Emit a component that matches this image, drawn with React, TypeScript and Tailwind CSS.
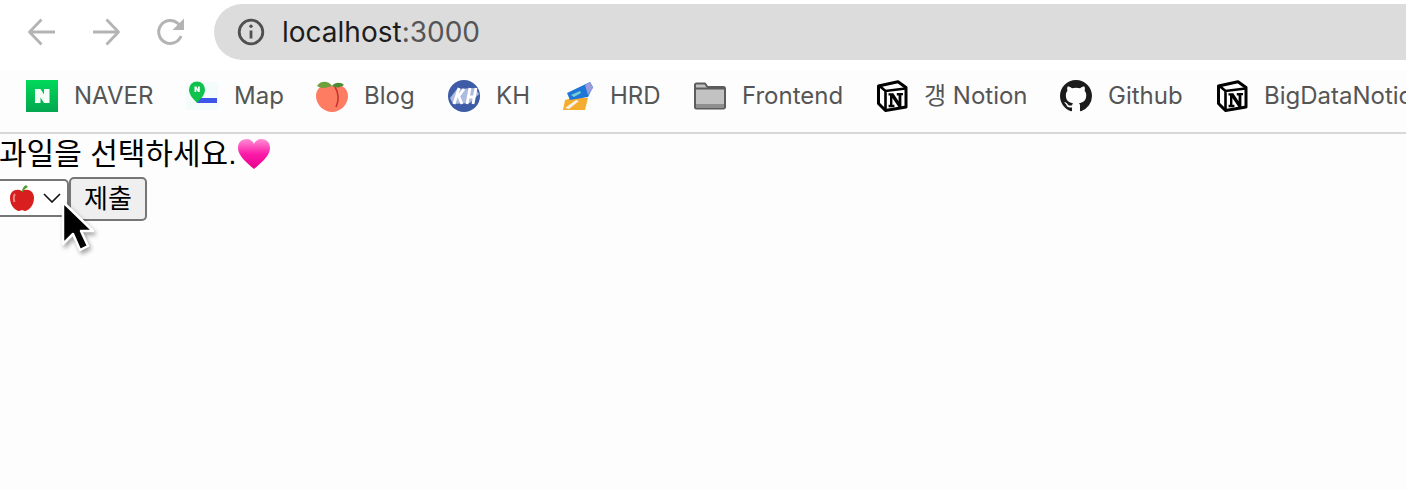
import React from 'react';

const NotionIcon = () => (
  <svg width="32" height="32" viewBox="0 0 32 32" className="shrink-0">
    <path d="M2.5 6 L22 1.8 L30 7.5 V27 L9.5 30.5 L2.5 23.5 Z" fill="#fff" stroke="#000" strokeWidth="3" strokeLinejoin="round" />
    <path d="M3 5.5 L9.5 11 L29.5 8.5 M9.5 11 V30" fill="none" stroke="#000" strokeWidth="2.6" />
    <path d="M12.5 13.2 H17.3 L22.6 21.2 V15.4 H20.8 V13 H27 V15.3 H25.4 V27.2 H22.6 L16.4 18 V24.8 H18.4 V27.2 H12.6 V24.8 H14 V15.4 H12.5 Z" fill="#000" />
  </svg>
);

const bookmarks: { label: string; labelClass: string; icon: React.ReactNode }[] = [
  {
    label: 'NAVER',
    labelClass: 'w-[78px]',
    icon: (
      <svg width="32" height="32" viewBox="0 0 32 32" className="shrink-0">
        <defs>
          <linearGradient id="naver" x1="0" y1="0" x2="0" y2="1">
            <stop offset="0" stopColor="#00d95a" />
            <stop offset="1" stopColor="#03a64f" />
          </linearGradient>
        </defs>
        <rect width="32" height="32" fill="url(#naver)" />
        <path d="M9 9 H14.5 L18 14.5 V9 H23.5 V23 H18 L14.5 17.5 V23 H9 Z" fill="#f4fff8" />
      </svg>
    ),
  },
  {
    label: 'Map',
    labelClass: 'w-[48px]',
    icon: (
      <svg width="32" height="32" viewBox="0 0 32 32" className="shrink-0">
        <rect x="0" y="2" width="32" height="28" fill="#f3fbfb" />
        <rect x="11" y="18" width="20" height="5" fill="#3d55e8" />
        <path d="M11 23 C7 18.5 3 15 3 9.5 A8 8 0 0 1 19 9.5 C19 15 15 18.5 11 23 Z" fill="#0fc24d" />
        <path d="M8.5 6.5 H10.3 L12 9.3 V6.5 H13.8 V12 H12 L10.3 9.3 V12 H8.5 Z" fill="#fff" />
      </svg>
    ),
  },
  {
    label: 'Blog',
    labelClass: 'w-[50px]',
    icon: (
      <svg width="32" height="32" viewBox="0 0 32 32" className="shrink-0">
        <path d="M16 6 C22 3 32 6 32 16 C32 25 24 32 16 32 C8 32 0 25 0 16 C0 6 10 3 16 6 Z" fill="#fd7c62" />
        <path d="M19 7 C23 13 23 21 20 27" fill="none" stroke="#c2342c" strokeWidth="1.6" />
        <path d="M1 6 C4 1 12 0 16 6 C11 8 5 9 1 6 Z" fill="#6fa03c" />
        <path d="M16 6 C19 2 25 2 28 5 C24 8 20 8 16 6 Z" fill="#4d8a34" />
      </svg>
    ),
  },
  {
    label: 'KH',
    labelClass: 'w-[32px]',
    icon: (
      <svg width="32" height="32" viewBox="0 0 32 32" className="shrink-0">
        <circle cx="16" cy="16" r="16" fill="#3d5ba6" />
        <path d="M2 18 L9 9 L27 8 L31 14 L22 23 L5 24 Z" fill="#aebbe0" />
        <path d="M11 8 L6 24 M10 17 L16 9 M11 17 L14 24 M19 24 L22 8 M25 24 L28 8 M19 17 H27" stroke="#fff" strokeWidth="2.8" fill="none" />
      </svg>
    ),
  },
  {
    label: 'HRD',
    labelClass: 'w-[50px]',
    icon: (
      <svg width="32" height="32" viewBox="0 0 32 32" className="shrink-0">
        <path d="M3 20 L10 18 L26 18 L23 30 L1 30 Z" fill="#f4ad2e" />
        <path d="M5 13 L28 2 L31 7 L26 17 L8 20 Z" fill="#1f76d6" />
        <path d="M23 5 L28 2 L31 8 L26 15 Z" fill="#9a9cdc" />
        <path d="M9 15 L18 11 L19 13 L12 17 Z" fill="#6fd0d8" />
        <path d="M3 28 L14 20 L17 21 L7 29 Z" fill="#f6f2e6" />
      </svg>
    ),
  },
  {
    label: 'Frontend',
    labelClass: 'w-[100px]',
    icon: (
      <svg width="32" height="32" viewBox="0 0 32 32" className="shrink-0">
        <path d="M1 27 V5 A1.5 1.5 0 0 1 2.5 3.5 H11 L13.5 7 H29.5 A1.5 1.5 0 0 1 31 8.5 V27 A1.5 1.5 0 0 1 29.5 28.5 H2.5 A1.5 1.5 0 0 1 1 27 Z" fill="#c2c2c2" stroke="#5c5c5c" strokeWidth="2" strokeLinejoin="round" />
        <path d="M1 8.5 H31" stroke="#5c5c5c" strokeWidth="2" />
        <rect x="2" y="24" width="28" height="3.5" fill="#8f8f8f" />
      </svg>
    ),
  },
  { label: '갱 Notion', labelClass: 'w-[102px]', icon: <NotionIcon /> },
  {
    label: 'Github',
    labelClass: 'w-[74px]',
    icon: (
      <svg width="32" height="32" viewBox="0 0 16 16" className="shrink-0" fill="#1b1b1b">
        <path d="M8 0C3.58 0 0 3.58 0 8c0 3.54 2.29 6.53 5.47 7.59.4.07.55-.17.55-.38 0-.19-.01-.82-.01-1.49-2.01.37-2.53-.49-2.69-.94-.09-.23-.48-.94-.82-1.13-.28-.15-.68-.52-.01-.53.63-.01 1.08.58 1.23.82.72 1.21 1.87.87 2.33.66.07-.52.28-.87.51-1.07-1.78-.2-3.64-.89-3.64-3.95 0-.87.31-1.59.82-2.15-.08-.2-.36-1.02.08-2.12 0 0 .67-.21 2.2.82.64-.18 1.32-.27 2-.27s1.36.09 2 .27c1.53-1.04 2.2-.82 2.2-.82.44 1.1.16 1.92.08 2.12.51.56.82 1.27.82 2.15 0 3.07-1.87 3.75-3.65 3.95.29.25.54.73.54 1.48 0 1.07-.01 1.93-.01 2.2 0 .21.15.46.55.38A8.01 8.01 0 0 0 16 8c0-4.42-3.58-8-8-8z" />
      </svg>
    ),
  },
  { label: 'BigDataNotion', labelClass: '', icon: <NotionIcon /> },
];

export default function App() {
  return (
    <div className="relative h-[490px] w-[1406px] overflow-hidden bg-[#fdfdfd] font-['Liberation_Sans','Noto_Sans_CJK_KR',sans-serif] text-black">
      {/* Toolbar */}
      <div className="flex h-[70px] items-start bg-white pt-1">
        <div className="flex h-14 w-[214px] shrink-0 items-center gap-8 pl-[26px] text-[#b4b4b4]">
          <svg width="32" height="32" viewBox="0 0 32 32" fill="none" stroke="currentColor" strokeWidth="2.8">
            <path d="M29 16 H4 M15.5 3.5 L3.5 16 L15.5 28.5" strokeLinejoin="round" />
          </svg>
          <svg width="32" height="32" viewBox="0 0 32 32" fill="none" stroke="currentColor" strokeWidth="2.8">
            <path d="M3 16 H28 M16.5 3.5 L28.5 16 L16.5 28.5" strokeLinejoin="round" />
          </svg>
          <svg width="32" height="32" viewBox="0 0 32 32" fill="none" stroke="currentColor" strokeWidth="3">
            <path d="M27 20 A11.5 11.5 0 1 1 24 7.5 L27.5 11" />
            <path d="M30 2.5 V14 H18.5 Z" fill="currentColor" stroke="none" />
          </svg>
        </div>
        <div className="flex h-14 flex-1 items-center gap-[18px] rounded-l-[28px] bg-[#dcdcdc] pl-[23px] font-['Inter',sans-serif] text-[28px]">
          <svg width="28" height="28" viewBox="0 0 28 28" fill="none" stroke="#505050" className="shrink-0">
            <circle cx="14" cy="14" r="11.8" strokeWidth="2.8" />
            <path d="M14 12.5 V20.5" strokeWidth="2.8" />
            <circle cx="14" cy="8.3" r="1.7" fill="#505050" stroke="none" />
          </svg>
          <span className="-ml-px text-[#1c1c1c]">
            localhost<span className="text-[#555555]">:3000</span>
          </span>
        </div>
      </div>

      {/* Bookmarks */}
      <div className="flex h-[64px] items-start gap-[34px] overflow-hidden border-b-2 border-[#d8d8d8] bg-[#fdfdfd] pl-[26px] pt-[10px] font-['Inter','Noto_Sans_CJK_KR',sans-serif] text-2xl leading-8 text-[#555555]">
        {bookmarks.map((item) => (
          <div key={item.label} className="flex shrink-0 items-center gap-4 whitespace-nowrap">
            {item.icon}
            <span className={item.labelClass}>{item.label}</span>
          </div>
        ))}
      </div>

      {/* Page */}
      <div className="flex h-[43px] items-center pb-[3px] text-[30px] leading-9">
        <span className="-ml-px">과일을 선택하세요.</span>
        <svg width="34" height="32" viewBox="0 0 34 32" className="ml-px shrink-0">
          <defs>
            <linearGradient id="heart" x1="0" y1="0" x2="0" y2="1">
              <stop offset="0" stopColor="#ff8ed4" />
              <stop offset="0.5" stopColor="#fb1ba8" />
              <stop offset="1" stopColor="#e8008c" />
            </linearGradient>
          </defs>
          <path d="M17 31 C10 25 1 18 1 10 C1 4 5 1 10 1 C13 1 16 3 17 6 C18 3 21 1 24 1 C29 1 33 4 33 10 C33 18 24 25 17 31 Z" fill="url(#heart)" />
        </svg>
      </div>
      <div className="flex items-start">
        <div className="mt-[2px] flex h-[38px] w-[69px] items-center rounded-r-[5px] border-2 border-l-0 border-[#767676] bg-white pl-[9px]">
          <svg width="26" height="28" viewBox="0 0 26 28" className="shrink-0">
            <path d="M13 7 C18 4 25 6 25 14 C25 22 19 27 16 27 C14.5 27 14 26 13 26 C12 26 11.5 27 10 27 C7 27 1 22 1 14 C1 6 8 4 13 7 Z" fill="#d81e1e" />
            <path d="M6 10 C4.5 12 4.5 15 5.5 18" stroke="#f28a80" strokeWidth="2" fill="none" />
            <path d="M13 8 C13 5 14 3 17 1 L19 3 C16 4 15 6 14 8 Z" fill="#4f9a2c" />
          </svg>
          <svg width="18" height="10" viewBox="0 0 18 10" className="ml-[8px] shrink-0" fill="none" stroke="#111" strokeWidth="1.6">
            <path d="M1 1 L9 9 L17 1" />
          </svg>
        </div>
        <button className="h-[44px] w-[78px] rounded-[5px] border-2 border-[#767676] bg-[#efefef] text-[26px] leading-none">
          제출
        </button>
      </div>

      {/* Mouse cursor */}
      <svg width="36" height="58" viewBox="0 0 36 58" className="absolute left-[60px] top-[199px] drop-shadow-[2px_3px_2px_rgba(0,0,0,0.35)]">
        <path d="M3 3 V45 L13 35 L20 51 L28 47 L21 32 L33 32 Z" fill="#000" stroke="#fff" strokeWidth="2.5" strokeLinejoin="round" />
      </svg>
    </div>
  );
}
